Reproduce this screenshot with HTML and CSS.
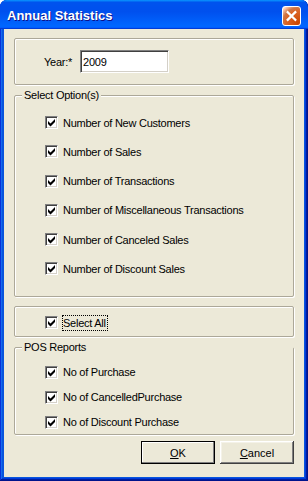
FILE: index.html
```html
<!DOCTYPE html>
<html lang="en">
<head>
  <meta charset="UTF-8">
  <title>Annual Statistics</title>
  <link rel="stylesheet" href="styles.css">
</head>
<body>
  <div class="window">
    <div class="titlebar">
      <span class="title">Annual Statistics</span>
      <button class="close" aria-label="Close">
        <svg width="18" height="18" viewBox="0 0 18 18"><path d="M5 5 L13 13 M13 5 L5 13" stroke="#fff" stroke-width="2.4" stroke-linecap="square"/></svg>
      </button>
    </div>

    <div class="client">
      <!-- year -->
      <div class="group year-group">
        <span class="year-label">Year:*</span>
        <span class="textbox">2009</span>
      </div>

      <!-- options -->
      <div class="group options">
        <span class="caption">Select Option(s)</span>
        <div class="row"><span class="check"><svg width="11" height="11" viewBox="0 0 11 11"><polygon points="2,4 4.5,6.5 9,2 9,5 4.5,9.5 2,7"/></svg></span>Number of New Customers</div>
        <div class="row"><span class="check"><svg width="11" height="11" viewBox="0 0 11 11"><polygon points="2,4 4.5,6.5 9,2 9,5 4.5,9.5 2,7"/></svg></span>Number of Sales</div>
        <div class="row"><span class="check"><svg width="11" height="11" viewBox="0 0 11 11"><polygon points="2,4 4.5,6.5 9,2 9,5 4.5,9.5 2,7"/></svg></span>Number of Transactions</div>
        <div class="row"><span class="check"><svg width="11" height="11" viewBox="0 0 11 11"><polygon points="2,4 4.5,6.5 9,2 9,5 4.5,9.5 2,7"/></svg></span>Number of Miscellaneous Transactions</div>
        <div class="row"><span class="check"><svg width="11" height="11" viewBox="0 0 11 11"><polygon points="2,4 4.5,6.5 9,2 9,5 4.5,9.5 2,7"/></svg></span>Number of Canceled Sales</div>
        <div class="row"><span class="check"><svg width="11" height="11" viewBox="0 0 11 11"><polygon points="2,4 4.5,6.5 9,2 9,5 4.5,9.5 2,7"/></svg></span>Number of Discount Sales</div>
      </div>

      <!-- select all -->
      <div class="group select-all">
        <div class="row"><span class="check"><svg width="11" height="11" viewBox="0 0 11 11"><polygon points="2,4 4.5,6.5 9,2 9,5 4.5,9.5 2,7"/></svg></span><span class="focus">Select All</span></div>
      </div>

      <!-- pos reports -->
      <div class="group pos">
        <span class="caption">POS Reports</span>
        <div class="row"><span class="check"><svg width="11" height="11" viewBox="0 0 11 11"><polygon points="2,4 4.5,6.5 9,2 9,5 4.5,9.5 2,7"/></svg></span>No of Purchase</div>
        <div class="row"><span class="check"><svg width="11" height="11" viewBox="0 0 11 11"><polygon points="2,4 4.5,6.5 9,2 9,5 4.5,9.5 2,7"/></svg></span>No of CancelledPurchase</div>
        <div class="row"><span class="check"><svg width="11" height="11" viewBox="0 0 11 11"><polygon points="2,4 4.5,6.5 9,2 9,5 4.5,9.5 2,7"/></svg></span>No of Discount Purchase</div>
      </div>

      <div class="buttons">
        <button class="btn default"><u>O</u>K</button>
        <button class="btn"><u>C</u>ancel</button>
      </div>
    </div>
  </div>
</body>
</html>
```

FILE: styles.css
```css
html, body {
  margin: 0;
  background: #fff;
}
body {
  font: 11px "Liberation Sans", Arial, sans-serif;
  letter-spacing: -0.25px;
  color: #000;
}

.window {
  width: 308px;
  height: 481px;
  display: flex;
  flex-direction: column;
  background: #0855dd;
  box-shadow: inset -1px -1px #00138c, inset 1px 1px #0831d9, inset -2px -2px #001ea0, inset 2px 2px #166aee, inset -3px -3px #003bda, inset 3px 3px #0855dd;
  border-radius: 7px 7px 0 0;
  overflow: hidden;
}

.titlebar {
  flex: none;
  height: 29px;
  box-sizing: border-box;
  padding: 2px 7px 0 7px;
  display: flex;
  align-items: center;
  justify-content: space-between;
  background: linear-gradient(180deg, #0997ff, #0053ee 8%, #0050ee 40%, #06f 88%, #06f 93%, #005bff 95%, #003dd7 96%, #003dd7);
}
.title {
  color: #fff;
  font-weight: bold;
  font-size: 13px;
  letter-spacing: 0;
  text-shadow: 1px 1px #0f1089;
}
.close {
  width: 19px;
  height: 20px;
  padding: 0;
  display: flex;
  align-items: center;
  justify-content: center;
  border: 1px solid #fff;
  border-radius: 3px;
  background: radial-gradient(circle at 90% 90%, #cc4600 0%, #dc6527 55%, #cd7546 70%, #ffccb2 90%, #fff 100%);
}

.client {
  flex: 1;
  margin: 0 4px 4px;
  padding: 9px 10px 0;
  background: #ece9d8;
  display: flex;
  flex-direction: column;
}

.group {
  box-sizing: border-box;
  border: 1px solid #aca899;
  box-shadow: inset 1px 1px #fff, 1px 1px #fff;
  border-radius: 2px;
}
.caption {
  display: table;
  margin: -7px 0 6px 7px;
  padding: 0 2px;
  line-height: 13px;
  background: #ece9d8;
}

.year-group {
  height: 47px;
  display: flex;
  align-items: center;
  padding-left: 29px;
}
.textbox {
  width: 89px;
  height: 23px;
  box-sizing: border-box;
  margin-left: 8px;
  padding-left: 2px;
  display: flex;
  align-items: center;
  background: #fff;
  border: 1px solid;
  border-color: #808080 #fff #fff #808080;
  box-shadow: inset 1px 1px #404040, inset -1px -1px #d4d0c8;
}

.row {
  display: flex;
  align-items: center;
  padding-left: 30px;
}
.check {
  width: 13px;
  height: 13px;
  box-sizing: border-box;
  margin-right: 5px;
  background: #fff;
  border: 1px solid;
  border-color: #808080 #fff #fff #808080;
  box-shadow: inset 1px 1px #404040, inset -1px -1px #d4d0c8;
}
.check svg {
  display: block;
}

.options {
  margin-top: 10px;
  padding-bottom: 12.5px;
}
.options .row {
  height: 29.25px;
}

.select-all {
  margin-top: 9px;
  height: 31px;
  padding-top: 2px;
  display: flex;
  align-items: center;
}
.select-all .check {
  margin-right: 4px;
}
.focus {
  border: 1px dotted #000;
  padding-right: 1px;
  line-height: 14px;
}

.pos {
  margin-top: 10px;
  padding-bottom: 1px;
  display: flex;
  flex-direction: column;
  gap: 3px;
}
.pos .caption {
  margin-bottom: 4px;
}
.pos .row {
  height: 22px;
}

.buttons {
  margin-top: 6px;
  display: flex;
  justify-content: flex-end;
  gap: 5px;
}
.btn {
  width: 74px;
  height: 23px;
  padding: 0;
  font: inherit;
  color: #000;
  background: #ece9d8;
  border: 0;
  box-shadow: inset -1px -1px #404040, inset 1px 1px #fff, inset -2px -2px #808080, inset 2px 2px #f4f2e8;
}
.btn.default {
  border: 1px solid #000;
  box-shadow: inset -1px -1px #808080, inset 1px 1px #fff;
}
```
